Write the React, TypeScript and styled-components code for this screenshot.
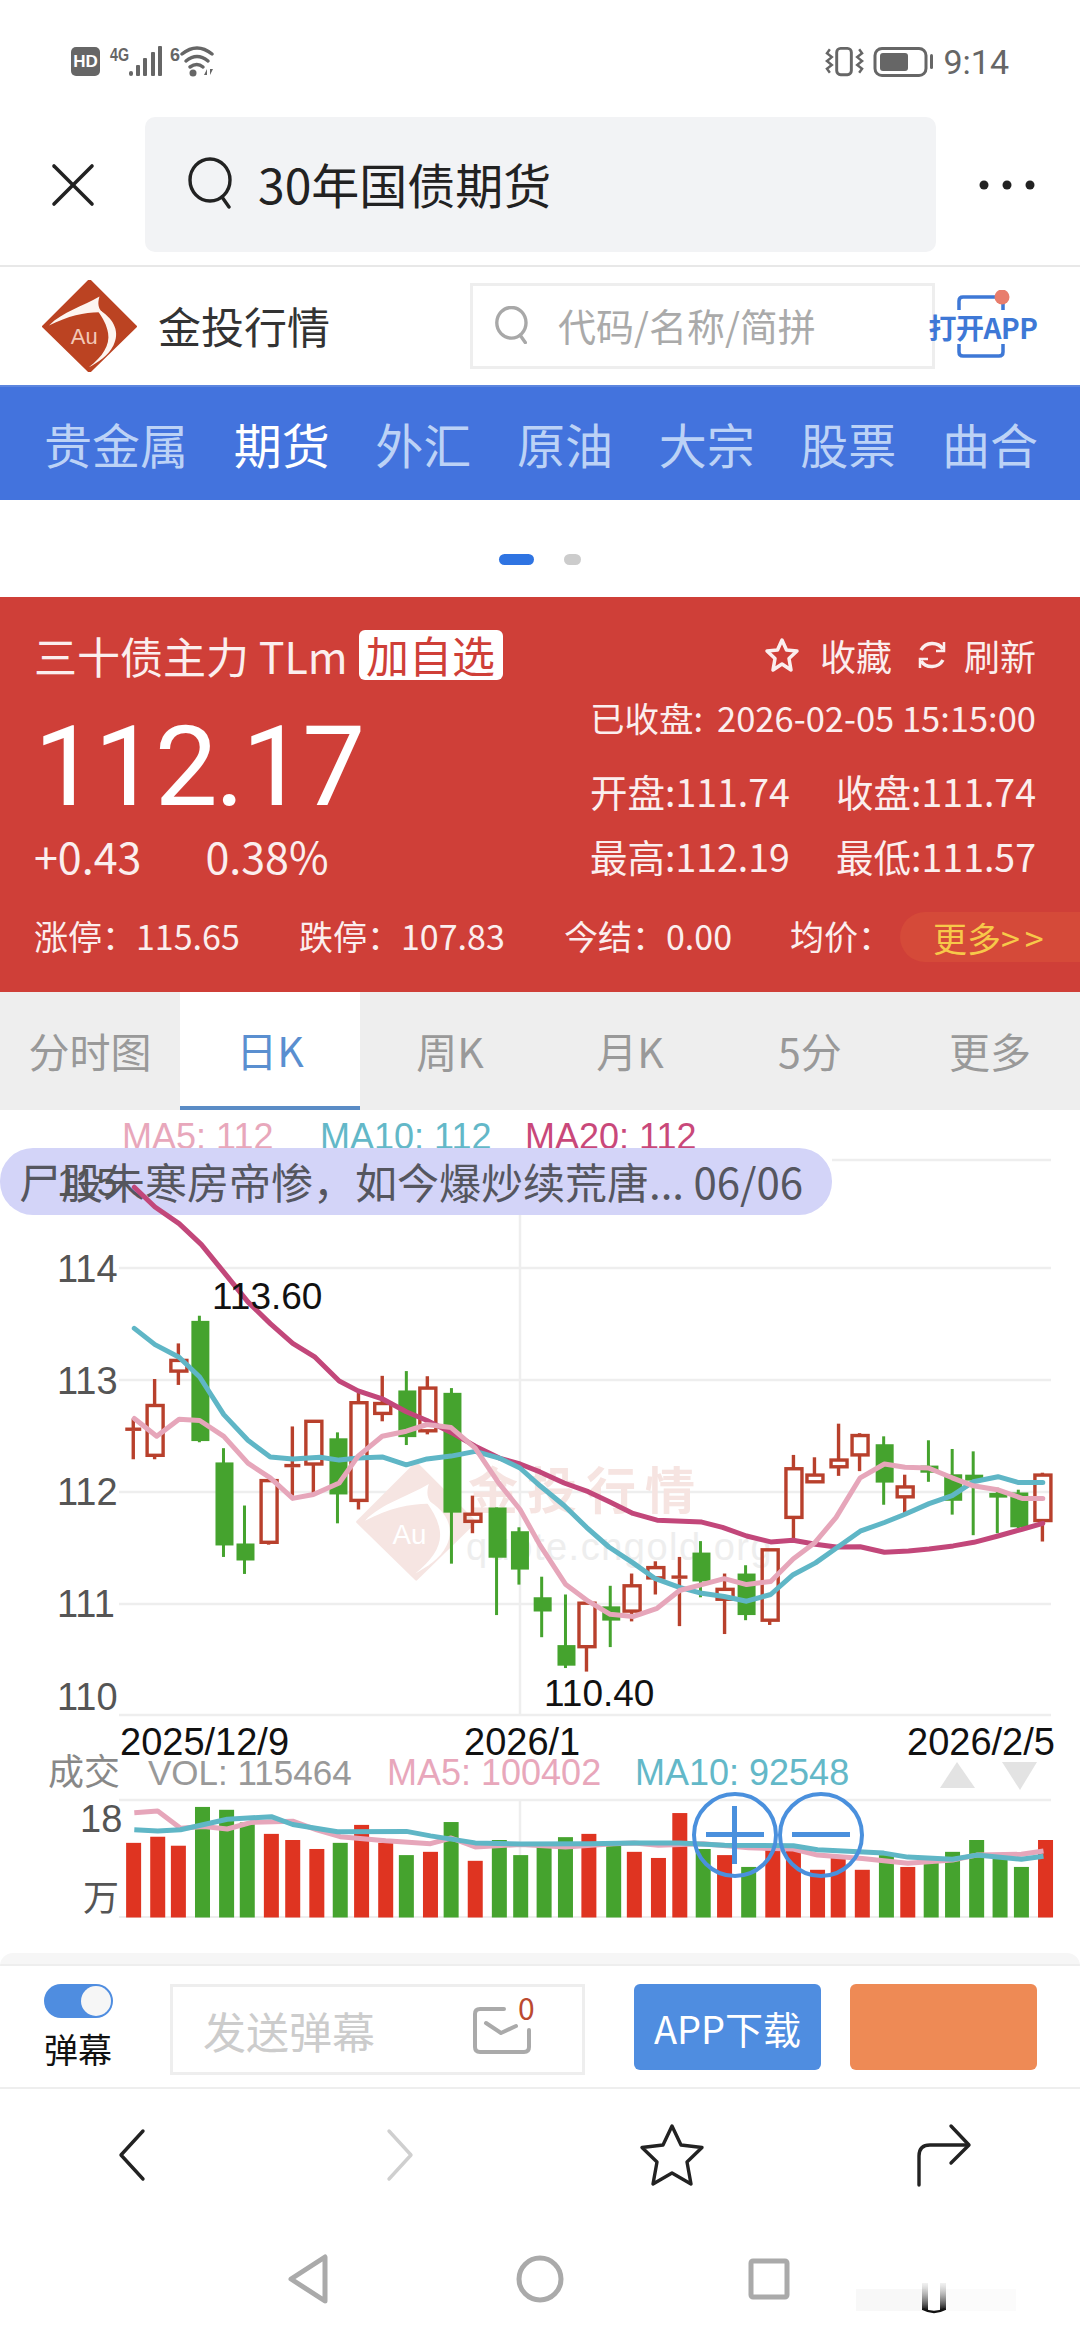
import React from "react";
import styled, { createGlobalStyle } from "styled-components";

const CJK = `"Noto Sans CJK SC", "Noto Sans", sans-serif`;
const LATIN = `"Liberation Sans", "Noto Sans CJK SC", sans-serif`;

const Global = createGlobalStyle`
  html, body { margin: 0; padding: 0; background: #fff; }
  body { font-family: ${CJK}; width: 1080px; }
  * { box-sizing: border-box; }
`;

const Page = styled.div`
  width: 1080px;
  height: 2340px;
  overflow: hidden;
  background: #fff;
  position: relative;
`;

/* ---------- status bar ---------- */
const StatusBar = styled.div`
  height: 80px;
  padding: 44px 71px 0 70px;
  display: flex;
  justify-content: space-between;
  align-items: flex-start;
`;
const StatusRight = styled.div`
  display: flex;
  align-items: center;
  gap: 8px;
  height: 36px;
`;
const Clock = styled.span`
  font-family: "Roboto", sans-serif;
  font-size: 34px;
  font-weight: 400;
  color: #666;
  line-height: 36px;
`;

/* ---------- browser top bar ---------- */
const TopBar = styled.div`
  height: 187px;
  padding-top: 37px;
  display: grid;
  grid-template-columns: 145px 791px 1fr;
  border-bottom: 2px solid #e8e8e8;
`;
const IconCell = styled.div`
  height: 135px;
  display: flex;
  align-items: center;
  justify-content: center;
`;
const AddressBox = styled.div`
  height: 135px;
  background: #f2f3f5;
  border-radius: 10px;
  display: flex;
  align-items: center;
  padding: 0 0 3px 43px;
  gap: 23px;
  font-size: 48px;
  color: #222;
`;

/* ---------- site header ---------- */
const SiteHeader = styled.div`
  height: 118px;
  display: flex;
  align-items: center;
  padding-left: 42px;
  position: relative;
`;
const Brand = styled.span`
  font-size: 43px;
  line-height: 60px;
  padding-bottom: 3px;
  color: #333;
  margin-left: 21px;
  width: 312px;
`;
const SiteSearch = styled.div`
  width: 465px;
  height: 86px;
  border: 3px solid #eeeeee;
  display: flex;
  align-items: center;
  padding: 0 0 3px 22px;
  gap: 28px;
  font-size: 38px;
  color: #aaa;
`;
const OpenApp = styled.div`
  position: absolute;
  left: 927px;
  top: 28px;
  width: 112px;
  height: 64px;
  display: flex;
  align-items: center;
  justify-content: center;
  color: #3e78d6;
  font-size: 28px;
  font-weight: 700;
  white-space: nowrap;
`;
const OpenAppFrame = styled.svg`
  position: absolute;
  left: 25px;
  top: -5px;
`;
const OpenAppLabel = styled.span`
  position: relative;
  letter-spacing: -0.5px;
`;

/* ---------- channel nav ---------- */
const ChannelNav = styled.div`
  height: 115px;
  background: #4373dd;
  display: flex;
  align-items: center;
  justify-content: space-between;
  padding: 0 42px 0 44px;
  box-shadow: inset 0 2px 0 #5d86df;
`;
const Channel = styled.span<{ $on?: boolean }>`
  font-size: 48px;
  line-height: 1;
  color: ${(p) => (p.$on ? "#ffffff" : "#bcd2f6")};
  font-weight: 400;
`;

/* ---------- carousel dots ---------- */
const Dots = styled.div`
  height: 97px;
  display: flex;
  align-items: center;
  justify-content: center;
  gap: 30px;
  padding-top: 22px;
`;
const Dot = styled.i<{ $on?: boolean }>`
  display: block;
  height: 11px;
  width: ${(p) => (p.$on ? 35 : 17)}px;
  border-radius: 6px;
  background: ${(p) => (p.$on ? "#2f74e2" : "#cccccc")};
`;

/* ---------- quote panel ---------- */
const Panel = styled.div`
  height: 395px;
  background: #cf3f38;
  color: #fbeeee;
  padding: 33px 44px 0 34px;
  position: relative;
`;
const PanelTop = styled.div`
  height: 50px;
  display: flex;
  align-items: center;
  justify-content: space-between;
`;
const Title = styled.div`
  display: flex;
  align-items: center;
  gap: 11px;
  font-size: 43px;
  line-height: 50px;
`;
const AddBadge = styled.span`
  background: #fff;
  color: #cf3f38;
  border-radius: 6px;
  width: 144px;
  height: 50px;
  text-align: center;
  font-size: 43px;
  line-height: 48px;
`;
const TopActions = styled.div`
  display: flex;
  align-items: center;
  font-size: 36px;
`;
const ActionIcon = styled.span<{ $gap: number }>`
  display: flex;
  margin-right: ${(p) => p.$gap}px;
`;
const ActionText = styled.span`
  margin-right: 24px;
  &:last-child { margin-right: 0; }
`;
const QuoteGrid = styled.div`
  display: grid;
  grid-template-columns: 556px 446px;
  height: 210px;
`;
const PriceBox = styled.div`
  padding-top: 18px;
`;
const Price = styled.div`
  font-family: "Roboto", sans-serif;
  font-size: 112px;
  font-weight: 400;
  line-height: 138px;
  letter-spacing: -2.6px;
  color: #fff;
`;
const Change = styled.div`
  display: flex;
  gap: 64px;
  font-size: 43px;
  line-height: 38px;
`;
const StatColumn = styled.div`
  display: flex;
  flex-direction: column;
  margin-top: -3px;
`;
const ClosedLine = styled.div`
  height: 80px;
  display: flex;
  align-items: center;
  justify-content: space-between;
  font-size: 34.5px;
  white-space: nowrap;
`;
const StatRow = styled.div<{ $h: number }>`
  height: ${(p) => p.$h}px;
  display: flex;
  align-items: center;
  justify-content: space-between;
  font-size: 37.5px;
  white-space: nowrap;
`;
const Limits = styled.div`
  height: 90px;
  display: flex;
  align-items: center;
  font-size: 34px;
  white-space: nowrap;
`;
const Limit = styled.span<{ $w: number }>`
  width: ${(p) => p.$w}px;
  flex: none;
`;
const MorePill = styled.div`
  position: absolute;
  right: 0;
  top: 315px;
  width: 180px;
  height: 50px;
  background: #d54a39;
  border-radius: 25px 0 0 25px;
  color: #f7c84a;
  font-size: 34px;
  line-height: 52px;
  padding-left: 33px;
  white-space: nowrap;
`;
const MoreArrows = styled.span`
  letter-spacing: 5px;
`;

/* ---------- period tabs ---------- */
const Tabs = styled.div`
  height: 118px;
  display: grid;
  grid-template-columns: repeat(6, 180px);
  background: #eeeeee;
`;
const Tab = styled.div<{ $on?: boolean }>`
  display: flex;
  align-items: center;
  justify-content: center;
  font-size: 41px;
  padding-bottom: ${(p) => (p.$on ? 0 : 3)}px;
  color: ${(p) => (p.$on ? "#5a8fd0" : "#999999")};
  background: ${(p) => (p.$on ? "#ffffff" : "transparent")};
  border-bottom: ${(p) => (p.$on ? "4px solid #5a8cc6" : "0")};
`;

/* ---------- chart ---------- */
const ChartArea = styled.div`
  position: relative;
  height: 843px;
`;
const ChartSvg = styled.svg`
  display: block;
  position: relative;
  z-index: 2;
`;
const Legend = styled.div`
  position: absolute;
  left: 122px;
  top: 7px;
  display: flex;
  font-family: ${LATIN};
  font-size: 36px;
  line-height: 40px;
  white-space: nowrap;
`;
const LegendItem = styled.span<{ $c: string; $w?: number }>`
  color: ${(p) => p.$c};
  width: ${(p) => (p.$w ? `${p.$w}px` : "auto")};
`;
const Danmaku = styled.div`
  position: absolute;
  z-index: 1;
  left: 0;
  top: 38px;
  width: 832px;
  height: 67px;
  border-radius: 33px;
  background: #d3d4f8;
  color: #55565f;
  font-size: 42px;
  line-height: 65px;
  padding-left: 19px;
  white-space: nowrap;
`;
const VolLegend = styled.div`
  position: absolute;
  z-index: 3;
  left: 48px;
  top: 643px;
  display: flex;
  font-family: ${LATIN};
  font-size: 36px;
  line-height: 40px;
  white-space: nowrap;
`;
const VolItem = styled.span<{ $c: string; $w: number; $s?: number }>`
  color: ${(p) => p.$c};
  width: ${(p) => p.$w}px;
  font-size: ${(p) => p.$s ?? 36}px;
`;
const ZoomButton = styled.div<{ $x: number; $plus?: boolean }>`
  position: absolute;
  z-index: 3;
  left: ${(p) => p.$x}px;
  top: 682px;
  width: 86px;
  height: 86px;
  border-radius: 50%;
  border: 4.5px solid #4a90dd;
  &::before {
    content: "";
    position: absolute;
    left: 10px;
    right: 10px;
    top: 36px;
    height: 5px;
    background: #4a90dd;
  }
  &::after {
    content: "";
    display: ${(p) => (p.$plus ? "block" : "none")};
    position: absolute;
    top: 10px;
    bottom: 10px;
    left: 36px;
    width: 5px;
    background: #4a90dd;
  }
`;

/* ---------- bottom ---------- */
const GapBar = styled.div`
  height: 13px;
  background: #f6f6f6;
  border-radius: 14px 14px 0 0;
  border-bottom: 2px solid #eeeeee;
`;
const ActionBar = styled.div`
  height: 123px;
  border-bottom: 2px solid #eeeeee;
  padding: 18px 43px 0 43px;
  display: flex;
  align-items: flex-start;
`;
const DanmakuToggle = styled.div`
  width: 70px;
  margin-right: 57px;
  display: flex;
  flex-direction: column;
  align-items: center;
`;
const Switch = styled.div`
  width: 69px;
  height: 34px;
  border-radius: 17px;
  background: #4f8de0;
  padding: 2px;
  display: flex;
  justify-content: flex-end;
`;
const Knob = styled.i`
  display: block;
  width: 30px;
  height: 30px;
  border-radius: 50%;
  background: #f6f6f6;
`;
const ToggleLabel = styled.span`
  font-size: 34px;
  line-height: 36px;
  margin-top: 13px;
  color: #111;
  white-space: nowrap;
`;
const SendBox = styled.div`
  width: 415px;
  height: 91px;
  border: 3px solid #eeeeee;
  display: flex;
  align-items: center;
  justify-content: space-between;
  padding: 0 50px 0 30px;
  font-size: 43px;
  color: #cccccc;
  margin-right: 49px;
  position: relative;
`;
const MailCount = styled.span`
  position: absolute;
  left: 345px;
  top: 2px;
  font-size: 30px;
  line-height: 36px;
  color: #bb4a30;
`;
const ActionButton = styled.div<{ $c: string }>`
  width: 187px;
  height: 86px;
  border-radius: 6px;
  background: ${(p) => p.$c};
  color: #fff;
  font-size: 38px;
  display: flex;
  align-items: center;
  justify-content: center;
  white-space: nowrap;
  margin-right: 29px;
  &:last-child { margin-right: 0; }
`;
const BrowserNav = styled.div`
  height: 130px;
  padding-top: 2px;
  display: grid;
  grid-template-columns: 264px repeat(3, 272px);
  align-items: center;
  justify-items: center;
`;
const SystemNav = styled.div`
  height: 119px;
  display: flex;
  align-items: center;
  padding-left: 287px;
  position: relative;
`;
const SysIcon = styled.svg<{ $gap: number }>`
  margin-right: ${(p) => p.$gap}px;
  flex: none;
`;
const Smudge = styled.svg`
  position: absolute;
  left: 856px;
  top: 62px;
`;

/* ---------- chart data (sampled from the picture) ---------- */
const lx = (x: number) => x / 2.904;
const rx = (x: number) => 540 + x / 2.904;
const yy = (y: number) => 1120 + y / 2.529;

type C = [number, number, number, number, number, 0 | 1];
const leftC: C[] = [
  [387, 755, 782, 786, 858, 1],
  [449, 655, 722, 848, 858, 1],
  [518, 565, 608, 635, 670, 1],
  [579, 495, 508, 812, 815, 0],
  [649, 830, 866, 1076, 1105, 0],
  [710, 975, 1071, 1114, 1148, 0],
  [780, 910, 912, 1068, 1074, 1],
  [849, 775, 874, 878, 950, 1],
  [910, 760, 762, 870, 945, 1],
  [980, 790, 805, 947, 1020, 0],
  [1041, 690, 715, 962, 985, 1],
  [1110, 647, 717, 742, 762, 1],
  [1180, 635, 684, 802, 822, 0],
  [1241, 648, 678, 786, 795, 1],
  [1311, 678, 690, 993, 1122, 0],
  [1372, 950, 997, 1015, 1045, 1],
  [1442, 980, 980, 1107, 1252, 0],
  [1507, 1030, 1040, 1137, 1175, 0],
  [1573, 1155, 1207, 1243, 1308, 0],
];
const rightC: C[] = [
  [74, 1200, 1328, 1380, 1386, 0],
  [135, 1222, 1222, 1332, 1395, 1],
  [204, 1178, 1230, 1266, 1333, 0],
  [266, 1147, 1178, 1242, 1268, 1],
  [335, 1116, 1132, 1158, 1200, 1],
  [405, 1105, 1156, 1160, 1280, 1],
  [466, 1065, 1094, 1167, 1207, 0],
  [536, 1147, 1187, 1212, 1300, 1],
  [597, 1126, 1147, 1252, 1265, 0],
  [667, 1087, 1087, 1265, 1277, 1],
  [736, 847, 882, 1005, 1060, 1],
  [797, 853, 898, 915, 918, 1],
  [867, 768, 860, 877, 900, 1],
  [928, 792, 798, 847, 888, 1],
  [998, 800, 820, 917, 973, 0],
  [1059, 897, 928, 953, 995, 1],
  [1128, 810, 874, 892, 915, 0],
  [1197, 832, 896, 963, 998, 0],
  [1258, 838, 897, 912, 1050, 0],
  [1328, 930, 943, 955, 1045, 0],
  [1389, 935, 942, 1030, 1032, 0],
  [1459, 892, 898, 1013, 1066, 1],
];
type P = [number, number];
const pts = (l: P[], r: P[]) =>
  [...l.map(([x, y]) => `${lx(x).toFixed(1)},${yy(y).toFixed(1)}`), ...r.map(([x, y]) => `${rx(x).toFixed(1)},${yy(y).toFixed(1)}`)].join(" ");

const ma20 = pts(
  [[390,170],[450,220],[520,262],[585,315],[650,385],[720,460],[785,515],[850,565],[915,600],[985,660],[1040,685],[1110,705],[1180,738],[1240,760],[1310,790],[1380,825],[1450,855],[1510,870]],
  [[0,890],[70,918],[140,940],[200,965],[270,995],[340,1012],[470,1017],[530,1030],[600,1052],[670,1067],[735,1063],[800,1073],[860,1080],[930,1079],[1000,1093],[1070,1090],[1130,1085],[1200,1077],[1260,1068],[1330,1052],[1400,1035],[1460,1020]]
);
const ma10 = pts(
  [[390,527],[450,568],[520,600],[580,650],[650,745],[720,810],[785,852],[850,857],[930,853],[985,860],[1040,855],[1110,852],[1180,872],[1240,857],[1310,850],[1380,838],[1450,855],[1510,880]],
  [[0,925],[70,975],[135,1030],[200,1080],[270,1120],[335,1160],[405,1182],[470,1197],[535,1205],[600,1217],[670,1200],[735,1150],[800,1120],[865,1080],[930,1040],[1000,1018],[1060,997],[1130,970],[1197,950],[1258,915],[1330,902],[1390,917],[1460,917]]
);
const ma5 = pts(
  [[390,755],[455,800],[520,757],[580,760],[650,800],[720,868],[785,905],[850,957],[910,947],[985,918],[1040,850],[1110,800],[1180,787],[1240,770],[1310,778],[1380,830],[1450,920],[1510,985]],
  [[0,1075],[75,1175],[140,1217],[204,1250],[270,1256],[340,1235],[405,1190],[470,1175],[535,1160],[600,1175],[670,1167],[735,1110],[797,1070],[860,1005],[930,905],[1000,870],[1060,878],[1128,880],[1197,905],[1258,925],[1328,935],[1400,957],[1460,957]]
);

const vx = (x: number) => x / 1.4519;
const vy = (y: number) => 1700 + y / 2.45;
const bars: [number, number, 0 | 1][] = [
  [194,350,1],[229,335,1],[259,357,1],[294,262,0],[329,269,0],[359,300,0],[394,328,1],[425,343,1],[460,365,1],[494,350,0],
  [525,306,1],[560,350,1],[590,380,0],[625,372,1],[655,299,0],[690,394,1],[725,343,0],[756,380,0],[790,357,0],[821,336,0],
  [855,328,1],[891,350,0],[921,372,1],[956,387,1],[987,277,1],[1021,365,0],[1052,380,1],[1087,409,0],[1122,365,1],[1152,365,1],
  [1187,416,1],[1217,387,1],[1252,416,1],[1287,380,0],[1318,409,1],[1352,394,0],[1383,372,0],[1418,343,0],[1452,380,0],[1483,409,0],[1518,343,1],
];
const vpts = (a: P[]) => a.map(([x, y]) => `${vx(x).toFixed(1)},${vy(y).toFixed(1)}`).join(" ");
const vma5 = vpts([[195,276],[229,272],[262,314],[296,310],[330,316],[365,300],[425,297],[460,318],[494,335],[560,345],[625,352],[655,338],[690,360],[756,354],[821,360],[891,352],[921,350],[956,356],[1021,352],[1087,362],[1152,365],[1187,380],[1252,388],[1318,400],[1383,392],[1418,380],[1483,378],[1515,370]]);
const vma10 = vpts([[195,318],[229,321],[262,318],[296,305],[330,292],[394,286],[425,305],[490,323],[590,322],[625,333],[690,350],[756,353],[855,352],[921,350],[987,350],[1052,356],[1152,357],[1187,367],[1283,375],[1318,385],[1383,390],[1418,380],[1483,390],[1515,383]]);

const RED = "#b8402c";
const GREEN = "#45a32e";
const GRID = "#eeeeee";

const Candle: React.FC<{ c: C; conv: (x: number) => number }> = ({ c, conv }) => {
  const [x0, wt, bt, bb, wb, up] = c;
  const x = conv(x0);
  const t = yy(bt), b = yy(bb);
  const doji = b - t < 3;
  return up ? (
    <g stroke={RED} fill="#fff" strokeWidth={3.4}>
      <line x1={x} x2={x} y1={yy(wt)} y2={t} />
      <line x1={x} x2={x} y1={b} y2={yy(wb)} />
      {doji ? (
        <line x1={x - 8} x2={x + 8} y1={t} y2={t} />
      ) : (
        <rect x={x - 7.5} y={t} width={16} height={b - t} fill="none" />
      )}
    </g>
  ) : (
    <g fill={GREEN}>
      <rect x={x - 1.5} y={yy(wt)} width={3} height={yy(wb) - yy(wt)} />
      <rect x={x - 8} y={t} width={18} height={b - t} />
    </g>
  );
};

const LogoMark: React.FC<{ body: string; light: string; textFill: string }> = ({ body, light, textFill }) => (
  <>
    <polygon points="210,55 350,195 210,332 70,195" fill={body} stroke={body} strokeWidth={6} strokeLinejoin="round" />
    <path d="M88 192 C130 150 190 135 240 105 C234 125 236 140 248 152 C205 150 150 160 88 192 Z" fill={light} />
    <path d="M245 148 C285 175 302 212 282 252 C266 285 235 302 208 318 C250 285 272 250 266 215 C262 190 250 170 236 150 Z" fill={light} />
    <text x="194" y="248" textAnchor="middle" fontFamily="Liberation Sans, sans-serif" fontSize="66" fill={textFill}>Au</text>
  </>
);

const PriceChart = () => (
  <ChartSvg width={1080} height={843} viewBox="0 1110 1080 843">
    {/* grid */}
    <line x1={832} x2={1051} y1={1160} y2={1160} stroke={GRID} strokeWidth={2.5} />
    {[1268, 1380, 1492, 1604, 1715, 1800].map((y) => (
      <line key={y} x1={119} x2={1051} y1={y} y2={y} stroke={GRID} strokeWidth={2.5} />
    ))}
    <line x1={520} x2={520} y1={1215} y2={1715} stroke={GRID} strokeWidth={2.5} />
    <line x1={520} x2={520} y1={1800} y2={1917} stroke={GRID} strokeWidth={2.5} />
    <line x1={119} x2={1051} y1={1917} y2={1917} stroke={GRID} strokeWidth={2} />

    {/* watermark */}
    <g transform="translate(328,1440) scale(0.42)">
      <LogoMark body="#f6e5e2" light="#ffffff" textFill="#ffffff" />
    </g>
    <text x="468" y="1509" fontFamily={CJK} fontSize="50" fontWeight="700" letterSpacing="9" fill="#f6e4e1">金投行情</text>
    <text x="466" y="1560" fontFamily={LATIN} fontSize="38" fill="#eeeeee" letterSpacing="1.5">quote.cngold.org</text>

    {/* price axis */}
    <g fontFamily={LATIN} fontSize="38" fill="#555555">
      <text x="57" y="1196">115</text>
      <text x="57" y="1282">114</text>
      <text x="57" y="1394">113</text>
      <text x="57" y="1505">112</text>
      <text x="57" y="1617">111</text>
      <text x="57" y="1710">110</text>
    </g>

    {leftC.map((c) => <Candle key={`l${c[0]}`} c={c} conv={lx} />)}
    {rightC.map((c) => <Candle key={`r${c[0]}`} c={c} conv={rx} />)}

    <polyline points={ma20} fill="none" stroke="#c2477a" strokeWidth={5} strokeLinejoin="round" strokeLinecap="round" />
    <polyline points={ma10} fill="none" stroke="#5fb6c6" strokeWidth={5} strokeLinejoin="round" strokeLinecap="round" />
    <polyline points={ma5} fill="none" stroke="#e6a6ba" strokeWidth={5} strokeLinejoin="round" strokeLinecap="round" />

    <g fontFamily={LATIN} fontSize="37" fill="#111111">
      <text x="212" y="1309">113.60</text>
      <text x="544" y="1706">110.40</text>
    </g>
    <g fontFamily={LATIN} fontSize="38" fill="#111111">
      <text x="120" y="1755">2025/12/9</text>
      <text x="464" y="1755">2026/1</text>
      <text x="907" y="1755">2026/2/5</text>
    </g>

    {/* volume */}
    <polygon points="957,1762 975,1788 940,1788" fill="#e3e3e3" />
    <polygon points="1002,1762 1037,1762 1020,1790" fill="#e3e3e3" />
    <g fontFamily={LATIN} fontSize="38" fill="#555555">
      <text x="80" y="1832">18</text>
      <text x="83" y="1911" fontFamily={CJK} fontSize="36">万</text>
    </g>
    {bars.map(([x, y, up]) => (
      <rect key={x} x={vx(x) - 7.5} y={vy(y)} width={15} height={1917.5 - vy(y)} fill={up ? "#df3421" : GREEN} />
    ))}
    <polyline points={vma5} fill="none" stroke="#e6a6ba" strokeWidth={5} strokeLinejoin="round" />
    <polyline points={vma10} fill="none" stroke="#5fb6c6" strokeWidth={5} strokeLinejoin="round" />
  </ChartSvg>
);

const SearchGlyph: React.FC<{ w: number; h: number; c: string; sw: number }> = ({ w, h, c, sw }) => (
  <svg width={w} height={h} viewBox="0 0 47 52" fill="none" stroke={c} strokeWidth={sw} strokeLinecap="round">
    <ellipse cx="22" cy="23" rx="20" ry="21" />
    <line x1="34" y1="40" x2="41" y2="50" />
  </svg>
);

export default function App() {
  return (
    <Page>
      <Global />
      <StatusBar>
        <svg width={146} height={36} viewBox="70 44 146 36">
          <rect x="71" y="47" width="29" height="29" rx="5" fill="#666" />
          <text x="85.5" y="67" textAnchor="middle" fontFamily="Liberation Sans, sans-serif" fontWeight="700" fontSize="17" fill="#fff">HD</text>
          <text x="110" y="61" fontFamily="Liberation Sans, sans-serif" fontWeight="700" fontSize="18" fill="#666" textLength="19" lengthAdjust="spacingAndGlyphs">4G</text>
          <g fill="#666">
            <rect x="129" y="71" width="4" height="5" rx="2" />
            <rect x="136" y="65" width="4" height="11" rx="1" />
            <rect x="143" y="58" width="4" height="18" rx="1" />
            <rect x="151" y="52" width="4" height="24" rx="1" />
            <rect x="158" y="46" width="4" height="30" rx="1" />
          </g>
          <text x="170" y="61" fontFamily="Liberation Sans, sans-serif" fontWeight="700" fontSize="18" fill="#666">6</text>
          <g fill="none" stroke="#666" strokeWidth="3.5" strokeLinecap="round">
            <path d="M182 54 Q197 42 212 54" />
            <path d="M186 61 Q197 52 208 61" />
            <path d="M190 67 Q197 62 203 67" />
          </g>
          <circle cx="193" cy="73" r="3.5" fill="#666" />
          <path d="M204 75 L207 69 L207 75 Z M210 69 L213 69 L210 75 Z" fill="#666" />
        </svg>
        <StatusRight>
          <svg width={40} height={32} viewBox="822 46 41 32" fill="none" stroke="#666">
            <rect x="834" y="48" width="15" height="27" rx="4" strokeWidth="3" />
            <path d="M827 49 L824 53 L829 57 L824 61 L829 65 L824 69 L827 73" strokeWidth="2.5" />
            <path d="M857 49 L860 53 L855 57 L860 61 L855 65 L860 69 L857 73" strokeWidth="2.5" />
          </svg>
          <svg width={62} height={32} viewBox="874 46 62 32">
            <rect x="876" y="48.5" width="51" height="27" rx="7" fill="none" stroke="#666" strokeWidth="3" />
            <rect x="881" y="53" width="28" height="18" rx="3" fill="#666" />
            <rect x="931" y="54" width="3" height="15" rx="1.5" fill="#666" />
          </svg>
          <Clock>9:14</Clock>
        </StatusRight>
      </StatusBar>

      <TopBar>
        <IconCell>
          <svg width={46} height={44} viewBox="0 0 46 44" stroke="#222" strokeWidth={3.6} strokeLinecap="round">
            <line x1="4" y1="3" x2="42" y2="41" />
            <line x1="42" y1="3" x2="4" y2="41" />
          </svg>
        </IconCell>
        <AddressBox>
          <SearchGlyph w={47} h={52} c="#222" sw={3.4} />
          <span>30年国债期货</span>
        </AddressBox>
        <IconCell>
          <svg width={60} height={12} viewBox="0 0 60 12" fill="#222">
            <circle cx="6" cy="6" r="4.5" />
            <circle cx="29" cy="6" r="4.5" />
            <circle cx="52" cy="6" r="4.5" />
          </svg>
        </IconCell>
      </TopBar>

      <SiteHeader>
        <svg width={95} height={92} viewBox="70 55 280 277">
          <LogoMark body="#bb4322" light="#fdf5f0" textFill="#f3c9b8" />
        </svg>
        <Brand>金投行情</Brand>
        <SiteSearch>
          <SearchGlyph w={35} h={38} c="#a8a8a8" sw={4.6} />
          <span>代码/名称/简拼</span>
        </SiteSearch>
        <OpenApp>
          <OpenAppFrame width={60} height={72} viewBox="0 0 60 72" fill="none" stroke="#3e78d6" strokeWidth={3.5}>
            <path d="M7 20 V11 Q7 7 11 7 H47 Q51 7 51 11 V20" />
            <path d="M7 54 V62 Q7 66 11 66 H47 Q51 66 51 62 V54" />
            <circle cx="50" cy="7" r="7.5" fill="#e87d6c" stroke="none" />
          </OpenAppFrame>
          <OpenAppLabel>打开APP</OpenAppLabel>
        </OpenApp>
      </SiteHeader>

      <ChannelNav>
        <Channel>贵金属</Channel>
        <Channel $on>期货</Channel>
        <Channel>外汇</Channel>
        <Channel>原油</Channel>
        <Channel>大宗</Channel>
        <Channel>股票</Channel>
        <Channel>曲合</Channel>
      </ChannelNav>

      <Dots>
        <Dot $on />
        <Dot />
      </Dots>

      <Panel>
        <PanelTop>
          <Title>
            <span>三十债主力 TLm</span>
            <AddBadge>加自选</AddBadge>
          </Title>
          <TopActions>
            <ActionIcon $gap={20}>
              <svg width={36} height={36} viewBox="0 0 36 36" fill="none" stroke="#fbeeee" strokeWidth={3.5} strokeLinejoin="round">
                <polygon points="18,3 22.5,13 33,14 25,21.5 27,33 18,27 9,33 11,21.5 3,14 13.5,13" />
              </svg>
            </ActionIcon>
            <ActionText>收藏</ActionText>
            <ActionIcon $gap={16}>
              <svg width={32} height={34} viewBox="0 0 32 34" fill="none" stroke="#fbeeee" strokeWidth={3.5}>
                <path d="M5 12 A13 13 0 0 1 27 11" />
                <path d="M27 22 A13 13 0 0 1 5 23" />
                <path d="M28 4 V13 H20" strokeWidth={2.5} />
                <path d="M4 30 V21 H12" strokeWidth={2.5} />
              </svg>
            </ActionIcon>
            <ActionText>刷新</ActionText>
          </TopActions>
        </PanelTop>
        <QuoteGrid>
          <PriceBox>
            <Price>112.17</Price>
            <Change>
              <span>+0.43</span>
              <span>0.38%</span>
            </Change>
          </PriceBox>
          <StatColumn>
            <ClosedLine>
              <span>已收盘:</span>
              <span>2026-02-05 15:15:00</span>
            </ClosedLine>
            <StatRow $h={66}>
              <span>开盘:111.74</span>
              <span>收盘:111.74</span>
            </StatRow>
            <StatRow $h={64}>
              <span>最高:112.19</span>
              <span>最低:111.57</span>
            </StatRow>
          </StatColumn>
        </QuoteGrid>
        <Limits>
          <Limit $w={265}>涨停：115.65</Limit>
          <Limit $w={265}>跌停：107.83</Limit>
          <Limit $w={226}>今结：0.00</Limit>
          <Limit $w={90}>均价：</Limit>
        </Limits>
        <MorePill>更多<MoreArrows>&gt;&gt;</MoreArrows></MorePill>
      </Panel>

      <Tabs>
        <Tab>分时图</Tab>
        <Tab $on>日K</Tab>
        <Tab>周K</Tab>
        <Tab>月K</Tab>
        <Tab>5分</Tab>
        <Tab>更多</Tab>
      </Tabs>

      <ChartArea>
        <PriceChart />
        <Legend>
          <LegendItem $c="#e8a7bb" $w={198}>MA5: 112</LegendItem>
          <LegendItem $c="#63b8c8" $w={205}>MA10: 112</LegendItem>
          <LegendItem $c="#c9487a">MA20: 112</LegendItem>
        </Legend>
        <Danmaku>尸股朱寒房帝惨，如今爆炒续荒唐... 06/06</Danmaku>
        <VolLegend>
          <VolItem $c="#888888" $w={100}>成交</VolItem>
          <VolItem $c="#999999" $w={239} $s={35}>VOL: 115464</VolItem>
          <VolItem $c="#e8a7bb" $w={248}>MA5: 100402</VolItem>
          <VolItem $c="#63b8c8" $w={212}>MA10: 92548</VolItem>
        </VolLegend>
        <ZoomButton $x={692} $plus />
        <ZoomButton $x={778} />
      </ChartArea>

      <GapBar />
      <ActionBar>
        <DanmakuToggle>
          <Switch><Knob /></Switch>
          <ToggleLabel>弹幕</ToggleLabel>
        </DanmakuToggle>
        <SendBox>
          <span>发送弹幕</span>
          <svg width={60} height={50} viewBox="0 0 60 50" fill="none" stroke="#aaaaaa" strokeWidth={4} strokeLinecap="round" strokeLinejoin="round">
            <path d="M32 4 H8 Q3 4 3 9 V42 Q3 47 8 47 H52 Q57 47 57 42 V25" />
            <path d="M14 18 L29 28 L44 21" />
          </svg>
          <MailCount>0</MailCount>
        </SendBox>
        <ActionButton $c="#4f8de0">APP下载</ActionButton>
        <ActionButton $c="#ee8a55" />
      </ActionBar>

      <BrowserNav>
        <svg width={30} height={54} viewBox="0 0 30 54" fill="none" stroke="#222" strokeWidth={3.4} strokeLinecap="round" strokeLinejoin="round">
          <path d="M26 3 L4 27 L26 51" />
        </svg>
        <svg width={30} height={54} viewBox="0 0 30 54" fill="none" stroke="#cfcfcf" strokeWidth={3.4} strokeLinecap="round" strokeLinejoin="round">
          <path d="M4 3 L26 27 L4 51" />
        </svg>
        <svg width={66} height={64} viewBox="0 0 66 64" fill="none" stroke="#222" strokeWidth={3.4} strokeLinejoin="round">
          <polygon points="33,3 42,22 63,24.5 48,39 52,61 33,50 14,61 18,39 3,24.5 24,22" />
        </svg>
        <svg width={60} height={64} viewBox="0 0 60 64" fill="none" stroke="#222" strokeWidth={3.4} strokeLinecap="round" strokeLinejoin="round">
          <path d="M5 62 V33 Q5 22 16 22 H54" />
          <path d="M37 3 L55 22 L37 40" />
        </svg>
      </BrowserNav>

      <SystemNav>
        <SysIcon $gap={187} width={42} height={50} viewBox="0 0 42 50" fill="none" stroke="#aaaaaa" strokeWidth={5} strokeLinejoin="round">
          <polygon points="38,3 38,47 4,25" />
        </SysIcon>
        <SysIcon $gap={184} width={48} height={48} viewBox="0 0 48 48" fill="none" stroke="#aaaaaa" strokeWidth={5}>
          <circle cx="24" cy="24" r="21" />
        </SysIcon>
        <SysIcon $gap={0} width={42} height={42} viewBox="0 0 42 42" fill="none" stroke="#aaaaaa" strokeWidth={5}>
          <rect x="3" y="3" width="36" height="36" rx="2" />
        </SysIcon>
        <Smudge width={200} height={36} viewBox="0 0 200 36">
          <defs>
            <linearGradient id="uFade" x1="0" x2="0" y1="0" y2="1">
              <stop offset="0" stopColor="#bbb" stopOpacity="0.2" />
              <stop offset="0.8" stopColor="#555" />
              <stop offset="1" stopColor="#111" />
            </linearGradient>
          </defs>
          <rect x="0" y="8" width="70" height="22" fill="#f8f8f8" />
          <rect x="90" y="8" width="70" height="22" fill="#fbfbfb" />
          <rect x="66" y="2" width="6" height="27" fill="url(#uFade)" />
          <rect x="84" y="2" width="6" height="27" fill="url(#uFade)" />
          <path d="M67 28 Q78 34 89 28" fill="none" stroke="#111" strokeWidth="2.5" />
        </Smudge>
      </SystemNav>
    </Page>
  );
}
